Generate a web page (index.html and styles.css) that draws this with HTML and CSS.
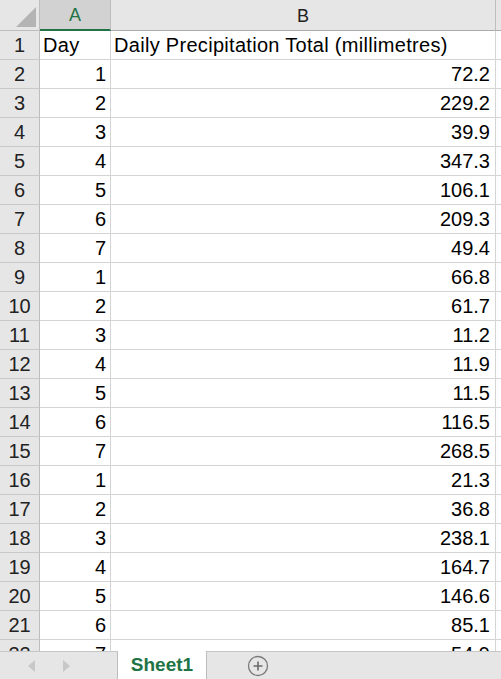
FILE: index.html
```html
<!DOCTYPE html>
<html>
<head>
<meta charset="utf-8">
<link rel="stylesheet" href="styles.css">
</head>
<body>
<div class="app">
  <div class="sheet">
    <div class="grid">
      <div class="corner"><span class="tri"></span></div>
      <div class="colhead sel">A</div>
      <div class="colhead">B</div>
      <div class="colhead end"></div>

      <div class="rowhead">1</div><div class="cell a txt">Day</div><div class="cell b txt">Daily Precipitation Total (millimetres)</div><div class="cell end"></div>
      <div class="rowhead">2</div><div class="cell a">1</div><div class="cell b">72.2</div><div class="cell end"></div>
      <div class="rowhead">3</div><div class="cell a">2</div><div class="cell b">229.2</div><div class="cell end"></div>
      <div class="rowhead">4</div><div class="cell a">3</div><div class="cell b">39.9</div><div class="cell end"></div>
      <div class="rowhead">5</div><div class="cell a">4</div><div class="cell b">347.3</div><div class="cell end"></div>
      <div class="rowhead">6</div><div class="cell a">5</div><div class="cell b">106.1</div><div class="cell end"></div>
      <div class="rowhead">7</div><div class="cell a">6</div><div class="cell b">209.3</div><div class="cell end"></div>
      <div class="rowhead">8</div><div class="cell a">7</div><div class="cell b">49.4</div><div class="cell end"></div>
      <div class="rowhead">9</div><div class="cell a">1</div><div class="cell b">66.8</div><div class="cell end"></div>
      <div class="rowhead">10</div><div class="cell a">2</div><div class="cell b">61.7</div><div class="cell end"></div>
      <div class="rowhead">11</div><div class="cell a">3</div><div class="cell b">11.2</div><div class="cell end"></div>
      <div class="rowhead">12</div><div class="cell a">4</div><div class="cell b">11.9</div><div class="cell end"></div>
      <div class="rowhead">13</div><div class="cell a">5</div><div class="cell b">11.5</div><div class="cell end"></div>
      <div class="rowhead">14</div><div class="cell a">6</div><div class="cell b">116.5</div><div class="cell end"></div>
      <div class="rowhead">15</div><div class="cell a">7</div><div class="cell b">268.5</div><div class="cell end"></div>
      <div class="rowhead">16</div><div class="cell a">1</div><div class="cell b">21.3</div><div class="cell end"></div>
      <div class="rowhead">17</div><div class="cell a">2</div><div class="cell b">36.8</div><div class="cell end"></div>
      <div class="rowhead">18</div><div class="cell a">3</div><div class="cell b">238.1</div><div class="cell end"></div>
      <div class="rowhead">19</div><div class="cell a">4</div><div class="cell b">164.7</div><div class="cell end"></div>
      <div class="rowhead">20</div><div class="cell a">5</div><div class="cell b">146.6</div><div class="cell end"></div>
      <div class="rowhead">21</div><div class="cell a">6</div><div class="cell b">85.1</div><div class="cell end"></div>
      <div class="rowhead">22</div><div class="cell a">7</div><div class="cell b">54.9</div><div class="cell end"></div>
    </div>
  </div>
  <div class="tabbar">
    <div class="nav">
      <svg class="arrow" width="10" height="14" viewBox="0 0 10 14"><polygon points="8,1 8,13 1,7" fill="#c8c8c8"/></svg>
      <svg class="arrow" width="10" height="14" viewBox="0 0 10 14"><polygon points="2,1 2,13 9,7" fill="#c8c8c8"/></svg>
    </div>
    <div class="tab active">Sheet1</div>
    <div class="addarea">
      <svg class="plus" width="22" height="22" viewBox="0 0 22 22"><circle cx="11" cy="11" r="9.5" fill="none" stroke="#7a7a7a" stroke-width="1.3"/><path d="M11 6.5V15.5M6.5 11H15.5" stroke="#6a6a6a" stroke-width="1.6"/></svg>
    </div>
  </div>
</div>
</body>
</html>
```

FILE: styles.css
```css
* { box-sizing: border-box; }
html, body { margin: 0; padding: 0; }
body { background: #fff; font-family: "Liberation Sans", Arial, sans-serif; }
.app { width: 501px; height: 679px; display: flex; flex-direction: column; overflow: hidden; }
.sheet { height: 651px; overflow: hidden; flex: none; }
.grid {
  display: grid;
  grid-template-columns: 40px 71px 385px 5px;
  grid-template-rows: 31px;
  grid-auto-rows: 29px;
  font-size: 20px;
  color: #000;
}
.corner {
  background: #e6e6e6;
  border-right: 1px solid #bdbdbd;
  border-bottom: 1px solid #bdbdbd;
  display: flex; align-items: flex-end; justify-content: flex-end;
  padding: 0 3px 3px 0;
}
.tri {
  width: 0; height: 0;
  border-left: 20px solid transparent;
  border-bottom: 20px solid #b4b4b4;
}
.colhead {
  background: #e6e6e6;
  border-right: 1px solid #bdbdbd;
  border-bottom: 1px solid #ababab;
  display: flex; align-items: center; justify-content: center;
  color: #222;
  font-size: 18px;
  padding-top: 2px;
}
.colhead.sel { background: #d2d2d2; color: #217346; border-bottom: 2px solid #217346; }
.colhead.end { border-right: none; }
.rowhead {
  background: #e6e6e6;
  border-right: 1px solid #bdbdbd;
  border-bottom: 1px solid #c9c9c9;
  display: flex; align-items: center; justify-content: center;
  color: #222;
  padding-top: 1px;
}
.cell {
  border-right: 1px solid #d4d4d4;
  border-bottom: 1px solid #d4d4d4;
  display: flex; align-items: center; justify-content: flex-end;
  padding: 1px 5px 0 3px;
  white-space: nowrap;
}
.cell.a { padding-right: 4px; }
.cell.txt { justify-content: flex-start; letter-spacing: 0.3px; }
.cell.end { border-right: none; }
.tabbar {
  height: 28px; flex: none;
  background: #e6e6e6;
  border-top: 1px solid #c6c6c6;
  display: flex;
  position: relative;
}
.nav {
  width: 118px;
  display: flex; align-items: center;
  padding-left: 27px; gap: 24px;
  border-right: 1px solid #bdbdbd;
}
.tab.active {
  width: 89px;
  margin-top: -1px;
  background: #fff;
  color: #217346;
  font-weight: bold;
  font-size: 19px;
  display: flex; align-items: center; justify-content: center;
  border-right: 1px solid #bdbdbd;
}
.addarea {
  width: 120px;
  display: flex; align-items: center; justify-content: center;
  padding-right: 18px;
}
.plus { display: block; }
```
